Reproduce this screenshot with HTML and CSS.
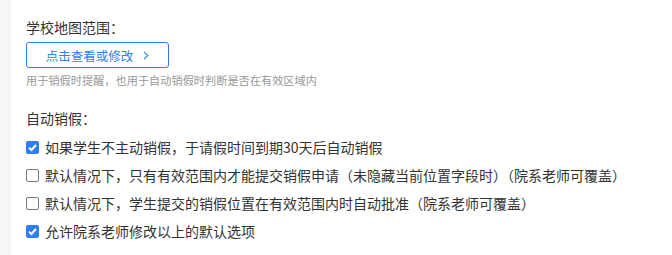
FILE: index.html
```html
<!DOCTYPE html>
<html lang="zh-CN">
<head>
    <meta charset="UTF-8">
    <meta name="viewport" content="width=device-width, initial-scale=1.0">
    <title>销假设置</title>
    <link rel="stylesheet" href="styles.css">
</head>
<body>
    <div class="page">
        <div class="side"></div>
        <div class="main">
            <div class="field-title">学校地图范围：</div>
            <button class="map-btn" type="button">
                <span>点击查看或修改</span>
                <svg class="chevron" width="6" height="9" viewBox="0 0 6 9"><path d="M1 0.8 L4.8 4.5 L1 8.2" fill="none" stroke="currentColor" stroke-width="1.1"/></svg>
            </button>
            <div class="hint">用于销假时提醒，也用于自动销假时判断是否在有效区域内</div>

            <div class="field-title section">自动销假：</div>
            <label class="check-row">
                <span class="box checked"><svg width="13" height="13" viewBox="0 0 13 13"><path d="M3 6.6 L5.4 9 L10 4" fill="none" stroke="#fff" stroke-width="2"/></svg></span>
                如果学生不主动销假，于请假时间到期30天后自动销假
            </label>
            <label class="check-row">
                <span class="box"></span>
                默认情况下，只有有效范围内才能提交销假申请（未隐藏当前位置字段时）（院系老师可覆盖）
            </label>
            <label class="check-row">
                <span class="box"></span>
                默认情况下，学生提交的销假位置在有效范围内时自动批准（院系老师可覆盖）
            </label>
            <label class="check-row">
                <span class="box checked"><svg width="13" height="13" viewBox="0 0 13 13"><path d="M3 6.6 L5.4 9 L10 4" fill="none" stroke="#fff" stroke-width="2"/></svg></span>
                允许院系老师修改以上的默认选项
            </label>
        </div>
    </div>
</body>
</html>
```

FILE: styles.css
```css
body {
    margin: 0;
    font-family: "Noto Sans CJK SC", "Noto Sans", sans-serif;
    color: #333;
    background: #fff;
}
.page {
    display: flex;
    min-height: 255px;
}
.side {
    width: 11px;
    background-color: #f5f6f7;
}
.main {
    flex: 1;
    padding: 17px 15px 0;
}
.field-title {
    font-size: 14px;
    line-height: 20px;
    color: #333;
}
.field-title.section {
    margin-top: 20px;
}
.map-btn {
    display: flex;
    align-items: center;
    justify-content: center;
    gap: 10px;
    width: 143px;
    height: 26px;
    margin-top: 5px;
    padding: 0;
    border: 1px solid #2f7ff3;
    border-radius: 3px;
    background: #fff;
    color: #2f7ff3;
    font-family: inherit;
    font-size: 12.5px;
    cursor: pointer;
}
.chevron {
    display: block;
}
.hint {
    margin-top: 4px;
    font-size: 11.2px;
    line-height: 16px;
    color: #999;
}
.check-row {
    display: flex;
    align-items: center;
    gap: 6px;
    height: 28px;
    font-size: 14px;
    color: #333;
}
.check-row:first-of-type {
    margin-top: 5px;
}
.box {
    width: 13px;
    height: 13px;
    box-sizing: border-box;
    border: 1px solid #777;
    border-radius: 2px;
    background: #fff;
    flex-shrink: 0;
}
.box.checked {
    border: none;
    background-color: #2f7ff3;
}
.box svg {
    display: block;
}
```
